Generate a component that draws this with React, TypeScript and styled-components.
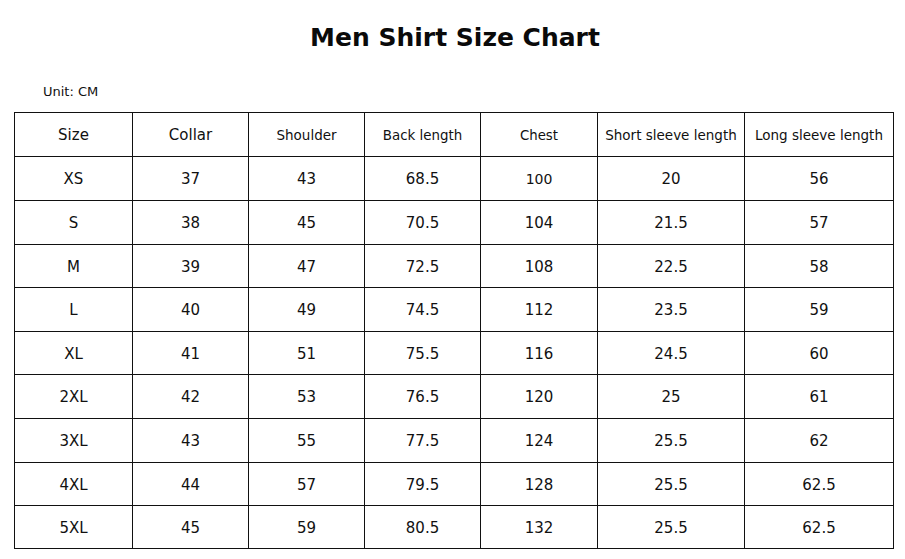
import React from "react";
import styled, { createGlobalStyle } from "styled-components";

const Global = createGlobalStyle`
  html, body { margin: 0; padding: 0; background: #ffffff; }
  body { font-family: "DejaVu Sans", Verdana, sans-serif; color: #111; }
`;

const Page = styled.div`
  width: 905px;
  height: 559px;
  background: #fff;
  display: flex;
  flex-direction: column;
`;

const Title = styled.h1`
  margin: 0;
  padding-top: 22px;
  height: 32px;
  line-height: 32px;
  text-align: center;
  font-family: "DejaVu Sans", Verdana, sans-serif;
  font-weight: bold;
  font-size: 25px;
  color: #0a0a0a;
  padding-left: 5px;
`;

const Unit = styled.div`
  margin-top: 30px;
  padding-left: 43px;
  height: 16px;
  line-height: 16px;
  font-size: 13px;
  color: #111;
`;

const Table = styled.div`
  margin-top: 12px;
  margin-left: 14px;
  display: grid;
  grid-template-columns: 118px 116px 116px 116px 117px 147px 149px;
  grid-template-rows: 44px 44px 44px 43px 44px 43px 44px 44px 43px 43px;
  width: max-content;
  border-left: 1px solid #111;
  border-top: 1px solid #111;
`;

const Cell = styled.div<{ $size?: number }>`
  border-right: 1px solid #111;
  border-bottom: 1px solid #111;
  display: flex;
  align-items: center;
  justify-content: center;
  font-size: ${(p) => p.$size ?? 15}px;
  color: #111;
  white-space: nowrap;
  padding-top: 1px;
`;

const headers: [string, number][] = [
  ["Size", 15],
  ["Collar", 15],
  ["Shoulder", 13.5],
  ["Back length", 13.4],
  ["Chest", 13.3],
  ["Short sleeve length", 13.5],
  ["Long sleeve length", 13.5],
];

const rows: string[][] = [
  ["XS", "37", "43", "68.5", "100", "20", "56"],
  ["S", "38", "45", "70.5", "104", "21.5", "57"],
  ["M", "39", "47", "72.5", "108", "22.5", "58"],
  ["L", "40", "49", "74.5", "112", "23.5", "59"],
  ["XL", "41", "51", "75.5", "116", "24.5", "60"],
  ["2XL", "42", "53", "76.5", "120", "25", "61"],
  ["3XL", "43", "55", "77.5", "124", "25.5", "62"],
  ["4XL", "44", "57", "79.5", "128", "25.5", "62.5"],
  ["5XL", "45", "59", "80.5", "132", "25.5", "62.5"],
];

export default function App() {
  return (
    <Page>
      <Global />
      <Title>Men Shirt Size Chart</Title>
      <Unit>Unit: CM</Unit>
      <Table>
        {headers.map(([h, s]) => (
          <Cell key={h} $size={s}>
            {h}
          </Cell>
        ))}
        {rows.map((r, i) =>
          r.map((v, j) => (
            <Cell key={`${i}-${j}`} $size={j === 4 && i === 0 ? 14 : 15}>
              {v}
            </Cell>
          ))
        )}
      </Table>
    </Page>
  );
}
